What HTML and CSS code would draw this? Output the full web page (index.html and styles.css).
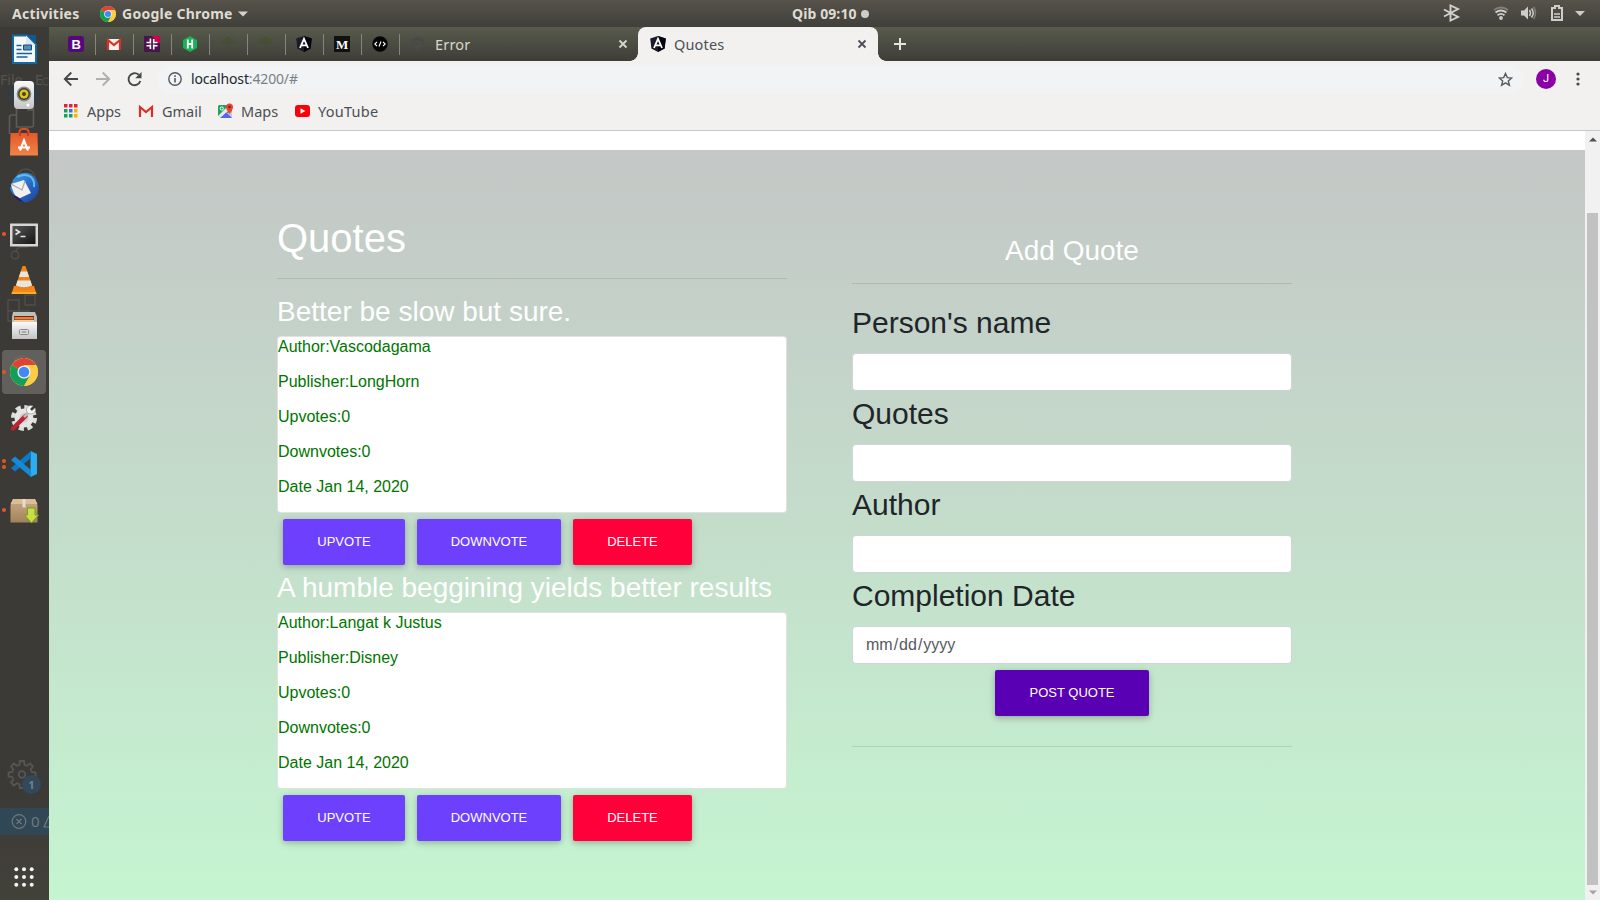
FILE: index.html
```html
<!DOCTYPE html>
<html lang="en">
<head>
<meta charset="utf-8">
<title>Quotes</title>
<link rel="stylesheet" href="styles.css">
</head>
<body>
<svg class="defs" width="0" height="0">
  <defs>
    <symbol id="chrome" viewBox="0 0 28 28">
      <circle cx="14" cy="14" r="14" fill="#fccc44"/>
      <path d="M14 14 1.900 7A14 14 0 0 0 14 28l6-10.500z" fill="#139e59"/>
      <path d="M14 14 1.900 7A14 14 0 0 1 26.100 7H14z" fill="#dc4437"/>
      <path d="M14 14 20 17.500 14 28A14 14 0 0 0 26.100 7L14 7z" fill="#fccc44"/>
      <circle cx="14" cy="14" r="6.600" fill="#f1f1f1"/>
      <circle cx="14" cy="14" r="5.300" fill="#4587f4"/>
    </symbol>
    <symbol id="gmail" viewBox="0 0 16 16">
      <path d="M1 3h14v11H1z" fill="#f3f1ef"/>
      <path d="M2 14V4l6 5 6-5v10" fill="none" stroke="#d93025" stroke-width="2.200"/>
    </symbol>
    <symbol id="angular" viewBox="0 0 16 16">
      <path d="M8 0l7.800 2.600-1.200 10L8 16l-6.600-3.400L.2 2.600z" fill="#1b1b29"/>
      <path d="M8 0l7.800 2.600-1.200 10L8 16z" fill="#05050f"/>
      <path d="M4 12 8 2.800 12 12M5.600 9.400h4.800" fill="none" stroke="#fff" stroke-width="1.800"/>
    </symbol>
    <symbol id="tree" viewBox="0 0 16 16">
      <path d="M8 15V8L4 5M8 9l4-3M8 7V3M6 15h4" fill="none" stroke="#474c35" stroke-width="1.300"/>
      <g fill="#46522f"><circle cx="4" cy="4" r="1.800"/><circle cx="8" cy="2.800" r="2"/><circle cx="12" cy="4" r="1.800"/><circle cx="2.500" cy="6.500" r="1.300"/><circle cx="13.200" cy="6.800" r="1.300"/></g>
    </symbol>
    <symbol id="close" viewBox="0 0 10 10"><path d="M1.500 1.500l7 7M8.500 1.500l-7 7" stroke="currentColor" stroke-width="1.800"/></symbol>
    <path id="tooth" d="M-3.800-9.200-2.600-9.700-2-13.500H2L2.600-9.700 3.800-9.200"/>
    <linearGradient id="metal" x2="0" y2="1"><stop offset="0" stop-color="#fafafa"/><stop offset="1" stop-color="#c4c4c4"/></linearGradient>
    <linearGradient id="bag" x2="0" y2="1"><stop offset="0" stop-color="#e5592b"/><stop offset="1" stop-color="#f08347"/></linearGradient>
    <linearGradient id="screen" x2="1" y2="1"><stop offset="0" stop-color="#555"/><stop offset="1" stop-color="#161616"/></linearGradient>
    <linearGradient id="bird" x2="1" y2="1"><stop offset="0" stop-color="#3da1ee"/><stop offset="1" stop-color="#1a3c9c"/></linearGradient>
    <linearGradient id="box" x2="0" y2="1"><stop offset="0" stop-color="#c9ab84"/><stop offset="1" stop-color="#a28259"/></linearGradient>
  </defs>
</svg>

<header class="panel">
  <div class="panel-left">
    <span class="activities">Activities</span>
    <svg class="panel-app" width="16" height="16"><use href="#chrome"/></svg>
    <span class="app-name">Google Chrome</span>
    <svg width="10" height="6"><path d="M0 .5h10L5 5.500z" fill="#d5d3cd"/></svg>
  </div>
  <div class="panel-clock"><span class="clock-text">Qib 09:10</span><i class="clock-dot"></i></div>
  <svg class="panel-status" width="153" height="27" viewBox="0 0 153 27">
    <path d="M2 9.500l14 7.500-7.500 3.500v-15L16 9 2 16.500" fill="none" stroke="#d2d0cc" stroke-width="1.900"/>
    <g fill="none" stroke="#cfcdc9" stroke-width="1.800"><path d="M52 10q7-5 14 0" opacity=".4"/><path d="M53.500 12.500q5.500-4 11 0"/><path d="M55.500 15.200q3.500-2.600 7 0"/></g>
    <circle cx="59" cy="18" r="1.900" fill="#cfcdc9"/>
    <path d="M79 10.500h3l4-4v13l-4-4h-3z" fill="#cfcdc9"/>
    <g fill="none" stroke="#cfcdc9" stroke-width="1.500"><path d="M87.500 10q2 3 0 6"/><path d="M89.500 8.500q3.500 4.500 0 9"/><path d="M91.500 7q4 6 0 12" opacity=".4"/></g>
    <path d="M110 8h3V6h4v2h3v12h-10z" fill="none" stroke="#cfcdc9" stroke-width="2"/>
    <path d="M112 14h6M112 17h6" stroke="#cfcdc9" stroke-width="1.500"/>
    <path d="M133 11h10l-5 5z" fill="#cfcdc9"/>
  </svg>
</header>

<div class="desktop">
  <nav class="dock">
    <svg class="ghost" width="49" height="873" viewBox="0 27 49 873">
      <text x="0" y="85" class="ghost-menu">File</text><text x="35" y="85" class="ghost-menu">E</text>
      <path d="M48.500 79a3.500 3.500 0 1 0 0 5" fill="none" stroke="#55544f"/>
      <g fill="none" stroke="#5d5c58" stroke-width="1.600">
        <path d="M16.500 127V106q0-2 2-2h10l5 5v16q0 2-2 2z"/><path d="M28 104v6h6M16 115h-4q-2.500 0-2.500 2v17"/>
      </g>
      <g fill="none" stroke="#4f4e49" stroke-width="1.400">
        <circle cx="26" cy="178" r="9"/><circle cx="15" cy="255" r="3.800"/><path d="M16 251q1-4 7-4h4v-3"/>
        <path d="M25 295h10v10H25zM8 300h11v11h10v10H8zM8 311h11v10"/>
        <circle cx="22" cy="364" r="8"/>
      </g>
      <g fill="none" stroke="#575652" stroke-width="1.800" transform="translate(22 774.500)">
        <use href="#tooth"/><use href="#tooth" transform="rotate(45)"/><use href="#tooth" transform="rotate(90)"/><use href="#tooth" transform="rotate(135)"/><use href="#tooth" transform="rotate(180)"/><use href="#tooth" transform="rotate(225)"/><use href="#tooth" transform="rotate(270)"/><use href="#tooth" transform="rotate(315)"/>
        <circle r="3.300"/>
      </g>
      <circle cx="31.500" cy="784.500" r="9.500" fill="#31495a"/>
      <text x="28.300" y="788.500" class="ghost-badge">1</text>
      <path d="M0 808h49v27H0z" fill="#304756"/>
      <g fill="none" stroke="#72787b" stroke-width="1.200"><circle cx="19" cy="821.500" r="6.800"/><path d="M16.500 819l5 5M21.500 819l-5 5M49 816l-5 11h6"/></g>
      <text x="31" y="827" class="ghost-count">0</text>
    </svg>

    <div class="slot"><svg viewBox="0 0 49 46">
      <path d="M13 8.500h14l9 9V36H13z" fill="#f5f7f8" stroke="#1369a3" stroke-width="2"/>
      <path d="M27 8h9v9z" fill="#0f5a92"/><path d="M26 8.500 35.500 18H26z" fill="#dfe7ec"/>
      <path d="M16.500 18.500h5M16.500 22.500h5M16.500 26.500H32M16.500 30h11" stroke="#1b6298" stroke-width="1.600"/>
      <path d="M23.500 18h8v5h-8z" fill="#4c90bd" stroke="#164e7a"/>
    </svg></div>
    <div class="slot"><svg viewBox="0 0 49 46">
      <circle cx="24" cy="22" r="14.500" fill="#2d3d4b"/>
      <rect x="14" y="8" width="20" height="28" rx="4" fill="url(#metal)"/>
      <circle cx="24" cy="21" r="7.400" fill="#8b8b88"/><circle cx="24" cy="21" r="6" fill="#3d3d34"/><circle cx="24" cy="21" r="4.500" fill="#dcc423"/><circle cx="24" cy="21" r="2" fill="#4a4521"/>
      <circle cx="28" cy="32" r="1.500" fill="#fff"/>
    </svg></div>
    <div class="slot"><svg viewBox="0 0 49 46">
      <path d="M19.500 15v-2q0-3 3-3h3q3 0 3 3v2" fill="none" stroke="#d94f24" stroke-width="2"/>
      <path d="M10.500 14h27l.5 22.500H10z" fill="url(#bag)"/>
      <path d="M20 31.500 24 21.500l4 10M18 28.500h12" fill="none" stroke="#fff" stroke-width="2.200"/>
      <path d="M20 14v3M28 14v3" stroke="#b33d18" stroke-width="1.500"/>
    </svg></div>
    <div class="slot"><svg viewBox="0 0 49 46">
      <path d="M13 15Q20 5 31 9q8 5 8 15-2 11-13 13.500-8-1-12-6L10 24z" fill="url(#bird)"/>
      <path d="M17 12q8-4 14 0 4 4 3 10" fill="none" stroke="#62b9f3" stroke-width="2"/>
      <path d="M11 19l13-4 7 13-13 6q-5-5-7-15z" fill="#f1f1f0"/>
      <path d="M11 19l11 6 3-9" fill="none" stroke="#a9aaab" stroke-width="1.200"/>
      <path d="M12 29q4 7 12 8l-6-5z" fill="#2b1e63"/>
    </svg></div>
    <div class="slot"><i class="pip"></i><svg viewBox="0 0 49 46">
      <rect x="10" y="12.500" width="28" height="23" fill="#d5d7d5"/><rect x="12.500" y="15" width="23" height="18" fill="url(#screen)"/>
      <path d="M15.500 18.500l4 2.500-4 2.500M20.500 25.500h5" fill="none" stroke="#e6e6e6" stroke-width="1.700"/>
    </svg></div>
    <div class="slot"><svg viewBox="0 0 49 46">
      <path d="M14 29h20l2.500 8H11.500z" fill="#f38b15"/><path d="M22.500 9h3L33 31q-9 5-18 0z" fill="#f28215"/>
      <path d="M20.800 14.500h6.400l1.900 5.500h-10.200zM17.500 23.500h13l1.500 5q-8 3.500-16 0z" fill="#e5e6e2"/><path d="M12 35h24l.5 2h-25z" fill="#ffa92e"/>
    </svg></div>
    <div class="slot"><svg viewBox="0 0 49 46">
      <path d="M13 9h22l2 5v22H12V14z" fill="#bdbdba"/><path d="M14 13h20v6H14z" fill="#5b3020"/><path d="M14.500 14h19v2.500h-19z" fill="#f27a31"/><path d="M14 17h20v2H14z" fill="#f1cda4"/>
      <path d="M12 19h25v17H12z" fill="url(#metal)"/><rect x="19.500" y="26.500" width="9" height="5" rx="1" fill="#ddd" stroke="#898989"/><path d="M21.500 29h5" stroke="#777"/>
    </svg></div>
    <div class="slot slot-active"><i class="pip"></i><svg viewBox="0 0 49 46"><use href="#chrome" x="10" y="9" width="28" height="28"/></svg></div>
    <div class="slot"><svg viewBox="0 0 49 46">
      <circle cx="24" cy="23" r="10.800" fill="none" stroke="#dededc" stroke-width="4.500" stroke-dasharray="5 3.480"/>
      <circle cx="24" cy="23" r="9.500" fill="#e5e5e3"/><circle cx="24" cy="23" r="4.500" fill="#cfcfcd"/>
      <path d="M13 33.500 25.500 21" stroke="#bb2430" stroke-width="4.500" stroke-linecap="round"/><path d="M24 22l5-5" stroke="#bbb" stroke-width="2.800"/>
      <path d="M33 11l-3 3 2 2 3-3q2 5-4 6-5 0-4.500-5 1-4.500 6.500-3z" fill="#f5f5f5" stroke="#999" stroke-width=".7"/>
    </svg></div>
    <div class="slot"><i class="pip pip-high"></i><i class="pip pip-low"></i><svg viewBox="0 0 49 46">
      <path d="M30.500 10 37 13v20l-6.500 3z" fill="#2badf3"/><path d="M31 10v7L15 30.500 11 27z" fill="#0d79c4"/><path d="M31 36v-7L15 15.500 11 19z" fill="#168bd5"/>
    </svg></div>
    <div class="slot"><i class="pip"></i><svg viewBox="0 0 49 46">
      <path d="M13 12h22l2.500 6v17.500h-27V18z" fill="url(#box)"/><path d="M13 12h22l2.500 5h-27z" fill="#d8bd98"/><path d="M22.500 12h3v9l-1.500-1-1.500 1z" fill="#e9dcc6"/>
      <path d="M27.500 21h7.500v7h3.500L31.500 36l-7-8h3z" fill="#c5e045" stroke="#7b9c1d"/>
    </svg></div>
    <svg class="app-grid" width="20" height="20" viewBox="0 0 20 20" fill="#f3f3f1">
      <circle cx="2.300" cy="2.300" r="2"/><circle cx="10" cy="2.300" r="2"/><circle cx="17.700" cy="2.300" r="2"/>
      <circle cx="2.300" cy="10" r="2"/><circle cx="10" cy="10" r="2"/><circle cx="17.700" cy="10" r="2"/>
      <circle cx="2.300" cy="17.700" r="2"/><circle cx="10" cy="17.700" r="2"/><circle cx="17.700" cy="17.700" r="2"/>
    </svg>
  </nav>

  <div class="browser">
    <div class="tabs">
      <div class="tab"><svg width="16" height="16"><rect width="16" height="16" rx="3" fill="#56077f"/><text x="3.500" y="12.700" class="glyph-b">B</text></svg></div>
      <div class="tab"><svg width="16" height="16"><use href="#gmail"/></svg></div>
      <div class="tab"><svg width="16" height="16"><path d="M0 0h16v16H0z" fill="#4a154b"/><path d="M8 0h8v7h-3z" fill="#d5004d"/><path d="M6.400 2.500v5M9.700 8.500v5M2.500 6.500h3M10.500 9.700h3M9.700 3v4.500M6.400 8.500v4.500M9 6.500h4.500M2.500 9.700h4.500" stroke="#fff" stroke-width="1.600" fill="none"/></svg></div>
      <div class="tab"><svg width="16" height="16"><path d="M8 0l7 4v8l-7 4-7-4V4z" fill="#16b455"/><path d="M5.800 3.500v9M10.200 3.500v9M5.800 8h4.400" stroke="#fff" stroke-width="1.800"/></svg></div>
      <div class="tab"><svg width="16" height="16"><use href="#tree"/></svg></div>
      <div class="tab"><svg width="16" height="16"><use href="#tree"/></svg></div>
      <div class="tab"><svg width="16" height="16"><use href="#angular"/></svg></div>
      <div class="tab"><svg width="16" height="16"><path d="M0 0h16v16H0z" fill="#111"/><text x="1.900" y="12.500" class="glyph-m">M</text></svg></div>
      <div class="tab"><svg width="16" height="16"><circle cx="8" cy="8" r="7.700" fill="#050505"/><path d="M5 5.800 2.800 8 5 10.200M11 5.800 13.200 8 11 10.200M9 5.500l-2 5" fill="none" stroke="#fff" stroke-width="1.100"/></svg></div>
      <div class="tab tab-error">
        <svg width="16" height="16"><circle cx="8" cy="8" r="6.800" fill="#484a46"/><path d="M4 6q3-2 5 0t4 0M6 12q3-4 6-2" stroke="#4e4f4b" fill="none" stroke-width="1.500"/></svg>
        <span class="tab-title">Error</span><svg class="tab-close" width="10" height="10"><use href="#close"/></svg>
      </div>
      <div class="tab tab-current">
        <svg width="16" height="16"><use href="#angular"/></svg>
        <span class="tab-title">Quotes</span><svg class="tab-close" width="10" height="10"><use href="#close"/></svg>
      </div>
      <svg class="tab-new" width="12" height="12"><path d="M6 0v12M0 6h12" stroke="#e6e4de" stroke-width="2"/></svg>
    </div>

    <div class="toolbar">
      <svg class="nav-icons" width="92" height="16" viewBox="0 0 92 16" fill="none" stroke-width="1.900">
        <path d="M15 8H2M8.300 1.500 1.800 8l6.500 6.500" stroke="#45494c"/>
        <path d="M33 8h13M39.700 1.500 46.200 8l-6.500 6.500" stroke="#aeafaf"/>
        <path d="M77.300 10a6 6 0 1 1-1.600-6.200" stroke="#45494c"/><path d="M78.500 1v6.300h-6.300z" fill="#45494c"/>
      </svg>
      <div class="address">
        <svg width="14" height="14" viewBox="0 0 14 14"><circle cx="7" cy="7" r="6.200" fill="none" stroke="#55595d" stroke-width="1.400"/><path d="M7 6v4.500M7 3.300v1.600" stroke="#55595d" stroke-width="1.600"/></svg>
        <span class="url">localhost<span class="url-rest">:4200/#</span></span>
        <svg class="star" width="15" height="15" viewBox="0 0 15 15"><path d="M7.500 1.500l1.800 4.100 4.400.4-3.400 2.900 1.100 4.400-3.900-2.400-3.900 2.400 1.100-4.400L1.300 6l4.400-.4z" fill="none" stroke="#55595d" stroke-width="1.400"/></svg>
      </div>
      <span class="avatar">J</span>
      <svg class="more" width="4" height="14" fill="#45494c"><circle cx="2" cy="2" r="1.600"/><circle cx="2" cy="7" r="1.600"/><circle cx="2" cy="12" r="1.600"/></svg>
    </div>

    <div class="bookmarks">
      <div class="bookmark bookmark-apps"><svg width="14" height="14"><path d="M0 0h3.500v3.500H0zM5 0h3.500v3.500H5zM10 0h3.500v3.500H10z" fill="#e0253a"/><path d="M0 5h3.500v3.500H0zM0 10h3.500v3.500H0zM5 10h3.500v3.500H5z" fill="#12a15b"/><path d="M5 5h3.500v3.500H5z" fill="#5260e8"/><path d="M10 5h3.500v3.500H10zM10 10h3.500v3.500H10z" fill="#f5b400"/></svg><span class="bookmark-name">Apps</span></div>
      <div class="bookmark bookmark-gmail"><svg width="16" height="16"><use href="#gmail"/></svg><span class="bookmark-name">Gmail</span></div>
      <div class="bookmark bookmark-maps"><svg width="16" height="16"><rect y="2" width="14" height="13" rx="1.500" fill="#1da261"/><path d="M0 15 8 8l6 7z" fill="#5c60f5"/><path d="M0 13 11 2h3v3L2 15H0z" fill="#e9e7e2"/><path d="M3 15l5-5.500 5 5.500z" fill="#5c60f5"/><path d="M9 10l5 5V8z" fill="#c9cbd0"/><circle cx="3.800" cy="5.500" r="1.600" fill="none" stroke="#fff"/><path d="M11.500 11Q8 6.500 8 4a3.500 3.500 0 0 1 7 0q0 2.500-3.500 7z" fill="#ea4335"/><circle cx="11.500" cy="4" r="1.300" fill="#7c1d17"/></svg><span class="bookmark-name">Maps</span></div>
      <div class="bookmark bookmark-youtube"><svg width="15" height="12"><rect width="15" height="12" rx="3" fill="#fb0007"/><path d="M5.500 3.300 10.300 6l-4.800 2.700z" fill="#fff"/></svg><span class="bookmark-name">YouTube</span></div>
    </div>

    <div class="viewport">
      <main class="page">
        <section class="quotes">
          <h1 class="quotes-title">Quotes</h1>
          <hr class="rule">
          <article class="quote">
            <h3 class="quote-text">Better be slow but sure.</h3>
            <div class="card">
              <p class="card-line">Author:Vascodagama</p>
              <p class="card-line">Publisher:LongHorn</p>
              <p class="card-line">Upvotes:0</p>
              <p class="card-line">Downvotes:0</p>
              <p class="card-line">Date Jan 14, 2020</p>
            </div>
            <div class="actions">
              <button class="btn btn-up">UPVOTE</button><button class="btn btn-down">DOWNVOTE</button><button class="btn btn-delete">DELETE</button>
            </div>
          </article>
          <article class="quote">
            <h3 class="quote-text">A humble beggining yields better results</h3>
            <div class="card">
              <p class="card-line">Author:Langat k Justus</p>
              <p class="card-line">Publisher:Disney</p>
              <p class="card-line">Upvotes:0</p>
              <p class="card-line">Downvotes:0</p>
              <p class="card-line">Date Jan 14, 2020</p>
            </div>
            <div class="actions">
              <button class="btn btn-up">UPVOTE</button><button class="btn btn-down">DOWNVOTE</button><button class="btn btn-delete">DELETE</button>
            </div>
          </article>
        </section>
        <form class="add">
          <h3 class="add-title">Add Quote</h3>
          <hr class="rule">
          <label class="label" for="person">Person's name</label>
          <input class="field" id="person" type="text">
          <label class="label" for="quote">Quotes</label>
          <input class="field" id="quote" type="text">
          <label class="label" for="author">Author</label>
          <input class="field" id="author" type="text">
          <label class="label">Completion Date</label>
          <div class="field field-date">mm<span class="slash">/</span>dd<span class="slash">/</span>yyyy</div>
          <button class="btn btn-post" type="button">POST QUOTE</button>
          <hr class="rule rule-end">
        </form>
      </main>
      <div class="scrollbar">
        <svg width="8" height="5"><path d="M0 4.500h8L4 .5z" fill="#505050"/></svg>
        <div class="thumb"></div>
        <svg width="8" height="5"><path d="M0 .5h8L4 4.500z" fill="#a3a3a3"/></svg>
      </div>
    </div>
  </div>
</div>
</body>
</html>
```
FILE: styles.css
```css
* { box-sizing: border-box; }
body {
  margin: 0;
  width: 1600px;
  height: 900px;
  overflow: hidden;
  display: flex;
  flex-direction: column;
  font-family: "Liberation Sans", Arial, sans-serif;
}
svg { display: block; flex: none; }
.defs { position: absolute; }

/* Desktop panel */
.panel {
  height: 27px;
  flex: none;
  display: grid;
  grid-template-columns: 792px auto 1fr;
  align-items: center;
  background: linear-gradient(#57534b, #403f3a);
  color: #dfdbd2;
  font: bold 14px/27px "Noto Sans", "Open Sans", sans-serif;
}
.panel-left { display: flex; align-items: center; padding-left: 12px; }
.activities { width: 88px; letter-spacing: 0.25px; }
.app-name { width: 116px; margin-left: 6px; white-space: nowrap; letter-spacing: 0.25px; }
.panel-clock { display: flex; align-items: center; }
.clock-text { width: 69px; font-size: 14px; letter-spacing: 0.1px; white-space: nowrap; }
.clock-dot { width: 8px; height: 8px; border-radius: 50%; background: #cfcdc9; }
.panel-status { justify-self: end; margin-right: 5px; }

.desktop { flex: 1; display: flex; min-height: 0; }

/* Dock */
.dock {
  position: relative;
  width: 49px;
  flex: none;
  display: flex;
  flex-direction: column;
  background: linear-gradient(#3b3a36 760px, #42413a);
}
.ghost { position: absolute; left: 0; top: 0; }
.ghost-menu { font: 14px "Noto Sans", sans-serif; fill: #55544f; }
.ghost-badge { font: bold 11px "Noto Sans", sans-serif; fill: #758089; }
.ghost-count { font: 15px "Noto Sans", sans-serif; fill: #72787b; }
.slot { position: relative; height: 46px; flex: none; }
.slot svg { position: relative; width: 49px; height: 46px; }
.slot-active::before {
  content: "";
  position: absolute;
  left: 2px;
  top: 1px;
  width: 44px;
  height: 44px;
  border-radius: 4px;
  background: rgba(130, 128, 124, 0.55);
}
.pip {
  position: absolute;
  left: 2px;
  top: 21px;
  width: 4px;
  height: 4px;
  border-radius: 50%;
  background: #e95420;
}
.pip-high { top: 18px; }
.pip-low { top: 24px; }
.app-grid { margin: auto 0 13px 14px; }

/* Browser chrome */
.browser { flex: 1; display: flex; flex-direction: column; min-width: 0; }
.tabs {
  height: 34px;
  flex: none;
  display: flex;
  align-items: center;
  padding-left: 9px;
  background: linear-gradient(#585a4c, #3e3e38);
}
.tab {
  width: 38px;
  height: 21px;
  display: flex;
  align-items: center;
  padding: 0 0 1px 10px;
  border-right: 1px solid #85857b;
}
.glyph-b { font: bold 13px "Liberation Sans", sans-serif; fill: #fff; }
.glyph-m { font: bold 13px "Liberation Serif", serif; fill: #fff; }
.tab-title { margin-left: 9px; font: 14.5px/20px "Noto Sans", sans-serif; }
.tab-close { margin-left: auto; }
.tab-error { width: 238px; border: 0; padding-right: 10px; color: #d8d6cb; }
.tab-error .tab-title { letter-spacing: 0.2px; }
.tab-current {
  position: relative;
  width: 240px;
  height: 34px;
  border: 0;
  border-radius: 8px 8px 0 0;
  padding: 0 11px 0 12px;
  background: #f2f1f0;
  color: #4b4f54;
}
.tab-current .tab-title { margin-left: 8px; letter-spacing: 0.15px; }
.tab-current::before,
.tab-current::after {
  content: "";
  position: absolute;
  bottom: 0;
  width: 8px;
  height: 8px;
}
.tab-current::before { left: -8px; background: radial-gradient(circle at 0 0, transparent 7.5px, #f2f1f0 8px); }
.tab-current::after { right: -8px; background: radial-gradient(circle at 100% 0, transparent 7.5px, #f2f1f0 8px); }
.tab-new { margin-left: 16px; color: #e6e4de; }

.toolbar {
  height: 36px;
  flex: none;
  display: flex;
  align-items: center;
  padding-left: 14px;
  background: #f2f1f0;
}
.nav-icons { margin-right: 2px; }
.address {
  width: 1367px;
  height: 28px;
  border-radius: 14px;
  display: flex;
  align-items: center;
  padding: 0 11px;
  background: #f1f3f5;
}
.url { margin-left: 9px; font: 14px/20px "Noto Sans", sans-serif; letter-spacing: -0.15px; color: #24272b; }
.url-rest { color: #7b7f84; }
.star { margin-left: auto; }
.avatar {
  width: 20px;
  height: 20px;
  margin-left: 12px;
  border-radius: 50%;
  background: #8a00a4;
  color: #fff;
  font: 11px/20px Roboto, sans-serif;
  text-align: center;
}
.more { margin-left: 20px; }

.bookmarks {
  height: 34px;
  flex: none;
  display: flex;
  align-items: center;
  padding: 0 0 5px 15px;
  background: #f2f1f0;
  border-bottom: 1px solid #c9c8c8;
}
.bookmark { display: flex; align-items: center; font: 14.5px/20px "Noto Sans", sans-serif; color: #4b4f54; }
.bookmark-name { margin-top: -1px; }
.bookmark-apps { width: 74px; gap: 9px; }
.bookmark-gmail { width: 80px; gap: 8px; }
.bookmark-maps { width: 77px; gap: 7px; }
.bookmark-youtube { gap: 8px; letter-spacing: 0.25px; }

/* Page */
.viewport { flex: 1; display: flex; min-height: 0; }
.page {
  width: 1536px;
  display: flex;
  align-items: flex-start;
  gap: 65px;
  border-top: 19px solid #fff;
  padding: 64px 0 0 228px;
  background: linear-gradient(#c4c7c6, #c4ddcb 50%, #c5f5d1);
}
.quotes { width: 510px; }
.quotes-title { margin: 0 0 16px; font-size: 40px; font-weight: 400; line-height: 48px; color: #fff; }
.rule { height: 1px; margin: 0 0 16px; border: 0; background: rgba(0, 0, 0, 0.1); }
.quote-text { height: 33px; margin: 0 0 8px; font-size: 28px; font-weight: 400; line-height: 33px; white-space: nowrap; color: #fff; }
.card { height: 177px; border: 1px solid rgba(223, 223, 223, 0.9); border-radius: 4px; background: #fff; }
.card-line { margin: 0 0 16px; font-size: 16px; line-height: 19px; color: #007500; }
.actions { display: flex; gap: 12px; padding: 6px; }
.btn {
  height: 46px;
  padding: 0;
  border: 0;
  border-radius: 2px;
  font: 13px/46px "Liberation Sans", Arial, sans-serif;
  color: #fff;
  box-shadow: 0 2px 5px rgba(0, 0, 0, 0.16), 0 2px 10px rgba(0, 0, 0, 0.12);
}
.btn-up { width: 122px; background: #6c40fc; }
.btn-down { width: 144px; background: #6c40fc; }
.btn-delete { width: 119px; background: #ff003b; }
.btn-post { width: 154px; margin: 6px auto 30px; background: #5900b5; }

.add { width: 440px; display: flex; flex-direction: column; padding-top: 20px; }
.add-title { margin: 0 0 16px; font-size: 28px; font-weight: 400; line-height: 33px; text-align: center; color: #fff; }
.label { height: 45px; margin-bottom: 8px; font-size: 30px; line-height: 45px; color: #212529; }
.field { width: 440px; height: 38px; padding: 0 13px; border: 1px solid #ced4da; border-radius: 4px; background: #fff; }
.field-date { font-size: 16px; line-height: 36px; color: #55595d; }
.slash { margin: 0 1px; }
.rule-end { margin: 0; }

.scrollbar {
  width: 15px;
  display: flex;
  flex-direction: column;
  align-items: center;
  padding: 6px 0 5px;
  background: #f1f1f1;
}
.thumb { width: 11px; height: 672px; margin: 71px 0 auto; background: #c1c1c1; }
```
